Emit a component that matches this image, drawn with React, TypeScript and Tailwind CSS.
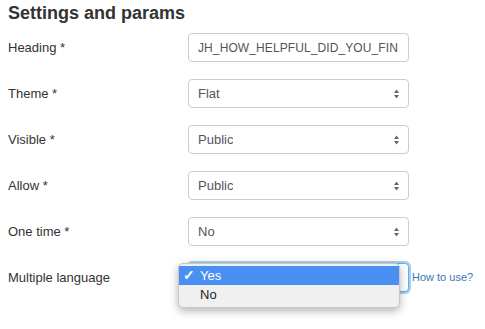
import React from "react";

const font = { fontFamily: '"Liberation Sans", Arial, sans-serif' };

const Arrows = () => (
  <svg width="7" height="11" viewBox="0 0 7 11" className="absolute right-[8px] top-1/2 -translate-y-1/2">
    <path d="M3.5 1 L6 4.5 L1 4.5 Z" fill="#666" />
    <path d="M3.5 10 L6 6.5 L1 6.5 Z" fill="#666" />
  </svg>
);

type FieldProps = {
  label: string;
  value: string;
  select?: boolean;
  focused?: boolean;
  narrow?: boolean;
  children?: React.ReactNode;
};

const Field = ({ label, value, select, focused, narrow, children }: FieldProps) => (
  <div className="flex items-center h-[29px] relative">
    <div className="w-[180px] text-[13px] text-[#333]">{label}</div>
    <div
      className={
        "relative w-[221px] h-[29px] rounded-[4px] bg-white flex items-center pl-[9px] text-[#555] " +
        (narrow ? "text-[12px] tracking-[0.1px] " : "text-[13px] ") +
        (focused
          ? "border border-[#66afe9] shadow-[0_0_0_2px_rgba(102,175,233,0.6)]"
          : "border border-[#ccc]")
      }
    >
      <span className="whitespace-nowrap overflow-hidden">{value}</span>
      {select && <Arrows />}
    </div>
    {children}
  </div>
);

export default function App() {
  return (
    <div className="w-[485px] h-[329px] bg-white pl-[8px] relative overflow-hidden" style={font}>
      <h2 className="text-[18px] leading-[24px] font-bold text-[#333] pt-[1px] h-[33px]">
        Settings and params
      </h2>
      <div className="flex flex-col gap-[17px]">
        <Field label="Heading *" value="JH_HOW_HELPFUL_DID_YOU_FIN" narrow />
        <Field label="Theme *" value="Flat" select />
        <Field label="Visible *" value="Public" select />
        <Field label="Allow *" value="Public" select />
        <Field label="One time *" value="No" select />
        <Field label="Multiple language" value="" select focused>
          <a className="ml-[3px] text-[11px] text-[#3a78b5]">How to use?</a>
          <div className="absolute left-[170px] top-0 w-[222px] rounded-[5px] bg-[#f0f0f0] border border-[#c8c8c8] shadow-[0_3px_8px_rgba(0,0,0,0.3)] py-[2px] text-[13px] text-[#222]">
            <div className="h-[19px] bg-[#4a90f2] text-white flex items-center">
              <span className="w-[21px] pl-[4px] text-[14px] font-bold">✓</span>
              <span>Yes</span>
            </div>
            <div className="h-[20px] flex items-center">
              <span className="w-[21px]" />
              <span>No</span>
            </div>
          </div>
        </Field>
      </div>
    </div>
  );
}
